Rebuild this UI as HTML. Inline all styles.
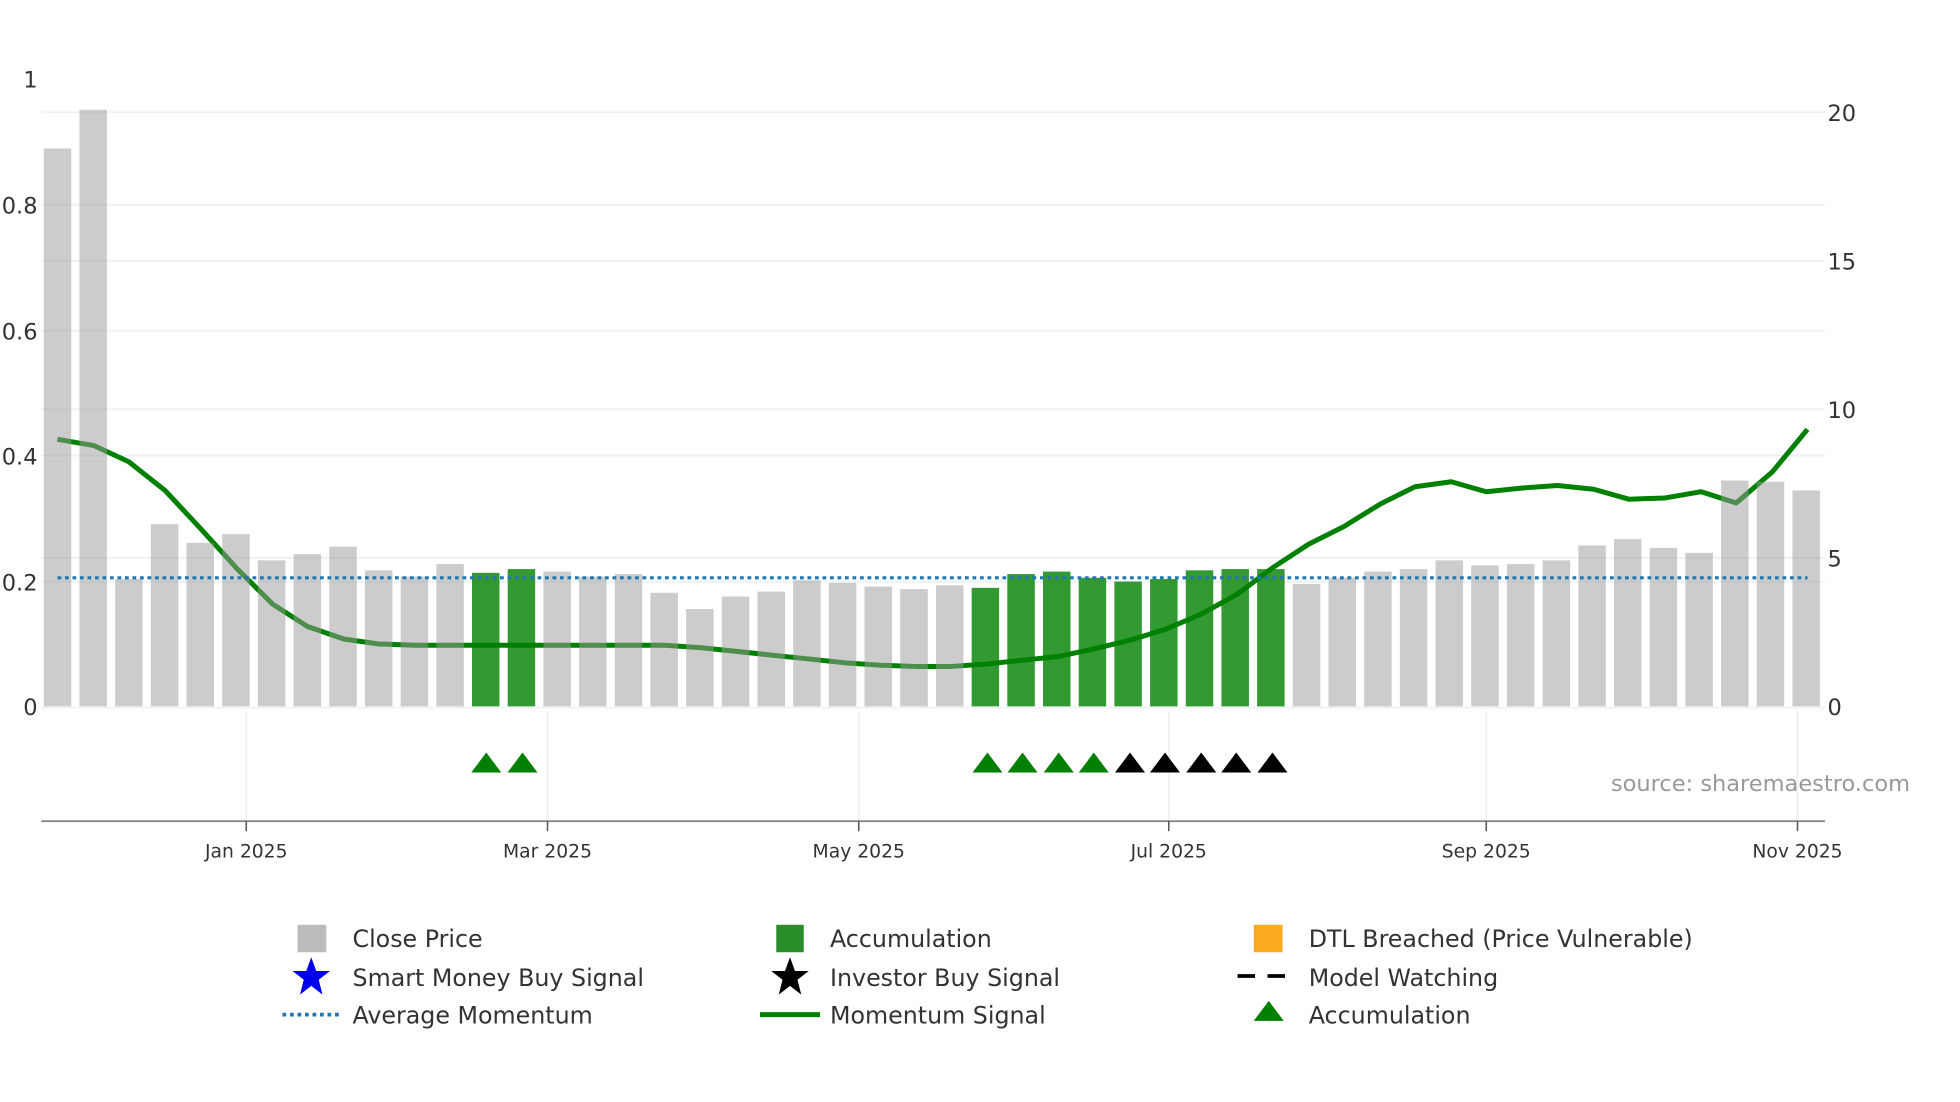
<!DOCTYPE html>
<html><head><meta charset="utf-8"><style>html,body{margin:0;padding:0;background:#fff;width:1960px;height:1102px;overflow:hidden}svg{display:block}text{font-family:"DejaVu Sans","Liberation Sans",sans-serif}</style></head>
<body>
<svg width="1960" height="1102" viewBox="0 0 1568 883" preserveAspectRatio="none" xmlns="http://www.w3.org/2000/svg">
<g stroke="#eef0f3" stroke-width="1.5">
<line x1="33" y1="90" x2="1460" y2="90"/><line x1="33" y1="164" x2="1460" y2="164"/><line x1="33" y1="209" x2="1460" y2="209"/><line x1="33" y1="265" x2="1460" y2="265"/><line x1="33" y1="328" x2="1460" y2="328"/><line x1="33" y1="365" x2="1460" y2="365"/><line x1="33" y1="447" x2="1460" y2="447"/><line x1="33" y1="466" x2="1460" y2="466"/><line x1="33" y1="567" x2="1460" y2="567"/>
<line x1="197" y1="570" x2="197" y2="658"/><line x1="438" y1="570" x2="438" y2="658"/><line x1="687" y1="570" x2="687" y2="658"/><line x1="935" y1="570" x2="935" y2="658"/><line x1="1189" y1="570" x2="1189" y2="658"/><line x1="1438" y1="570" x2="1438" y2="658"/>
</g>
<g font-size="18" fill="#333">
<text x="30" y="70" text-anchor="end">1</text><text x="30" y="171" text-anchor="end">0.8</text><text x="30" y="272" text-anchor="end">0.6</text><text x="30" y="372" text-anchor="end">0.4</text><text x="30" y="473" text-anchor="end">0.2</text><text x="30" y="573" text-anchor="end">0</text>
<text x="1462" y="97">20</text><text x="1462" y="216">15</text><text x="1462" y="335">10</text><text x="1462" y="454">5</text><text x="1462" y="573">0</text>
</g>
<polyline fill="none" stroke="#008000" stroke-width="4" stroke-linejoin="round" points="46,352 75,357 103,370 132,393 160,423 189,455 218,484 246,502 275,512 303,516 332,517 360,517 389,517 418,517 446,517 475,517 504,517 532,517 561,519 590,522 618,525 647,528 675,531 704,533 732,534 761,534 790,532 818,529 847,526 875,520 904,513 933,504 961,492 990,476 1018,455 1047,436 1075,422 1104,404 1132,390 1161,386 1189,394 1218,391 1246,389 1275,392 1303,400 1332,399 1361,394 1389,403 1418,378 1446,344"/>
<g id="bars"></g>
<line x1="46" y1="463" x2="1446" y2="463" stroke="#1f77b4" stroke-width="2.5" stroke-dasharray="3,3"/>
<g id="tri"></g>
<line x1="33" y1="658" x2="1460" y2="658" stroke="#888" stroke-width="1.5"/>
<g stroke="#555" stroke-width="1.2"><line x1="197" y1="658" x2="197" y2="666"/><line x1="438" y1="658" x2="438" y2="666"/><line x1="687" y1="658" x2="687" y2="666"/><line x1="935" y1="658" x2="935" y2="666"/><line x1="1189" y1="658" x2="1189" y2="666"/><line x1="1438" y1="658" x2="1438" y2="666"/></g>
<g font-size="15" fill="#333" text-anchor="middle">
<text x="197" y="687">Jan 2025</text><text x="438" y="687">Mar 2025</text><text x="687" y="687">May 2025</text><text x="935" y="687">Jul 2025</text><text x="1189" y="687">Sep 2025</text><text x="1438" y="687">Nov 2025</text>
</g>
<text x="1528" y="634" font-size="18" fill="#999" text-anchor="end">source: sharemaestro.com</text>
<g font-size="19" fill="#333">
<rect x="238" y="741" width="23" height="22" fill="#bbb"/><text x="282" y="759">Close Price</text>
<rect x="621" y="741" width="22" height="22" fill="#2a8f2a"/><text x="664" y="759">Accumulation</text>
<rect x="1003" y="741" width="23" height="22" fill="#fba920"/><text x="1047" y="759">DTL Breached (Price Vulnerable)</text>
<polygon points="249,767 253,778 264,778 255,785 258,797 249,790 240,797 243,785 234,778 245,778" fill="#0000ee"/><text x="282" y="790">Smart Money Buy Signal</text>
<polygon points="632,767 636,778 647,778 638,785 641,797 632,790 623,797 626,785 617,778 628,778" fill="#000"/><text x="664" y="790">Investor Buy Signal</text>
<line x1="990" y1="782" x2="1037" y2="782" stroke="#000" stroke-width="3" stroke-dasharray="14,10"/><text x="1047" y="790">Model Watching</text>
<line x1="226" y1="813" x2="271" y2="813" stroke="#1f77b4" stroke-width="3" stroke-dasharray="3,3"/><text x="282" y="820">Average Momentum</text>
<line x1="608" y1="813" x2="656" y2="813" stroke="#008000" stroke-width="4"/><text x="664" y="820">Momentum Signal</text>
<polygon points="1015,802 1027,818 1003,818" fill="#008000"/><text x="1047" y="820">Accumulation</text>
</g>
</svg>
<script>
var tops=[119,88,464,420,435,428,449,444,438,457,462,452,459,456,458,462,460,475,488,478,474,465,467,470,472,469,471,460,458,463,466,464,457,456,456,468,463,458,456,449,453,452,449,437,432,439,443,385,386,393];
var ns="http://www.w3.org/2000/svg",g=document.getElementById("bars");
tops.forEach(function(t,i){var r=document.createElementNS(ns,"rect");var c=46+i*28.55;r.setAttribute("x",c-11);r.setAttribute("y",t);r.setAttribute("width",22);r.setAttribute("height",566-t);
var gr=(i==12||i==13||(i>=26&&i<=34));r.setAttribute("fill",gr?"#008000":"#999");r.setAttribute("fill-opacity",gr?"0.8":"0.5");g.appendChild(r);});
var tg=document.getElementById("tri");
[[389,0],[418,0],[790,0],[818,0],[847,0],[875,0],[904,1],[932,1],[961,1],[989,1],[1018,1]].forEach(function(p){var q=document.createElementNS(ns,"polygon");var x=p[0];q.setAttribute("points",(x)+",603 "+(x+12)+",619 "+(x-12)+",619");q.setAttribute("fill",p[1]?"#000":"#008000");tg.appendChild(q);});
</script>
</body></html>
